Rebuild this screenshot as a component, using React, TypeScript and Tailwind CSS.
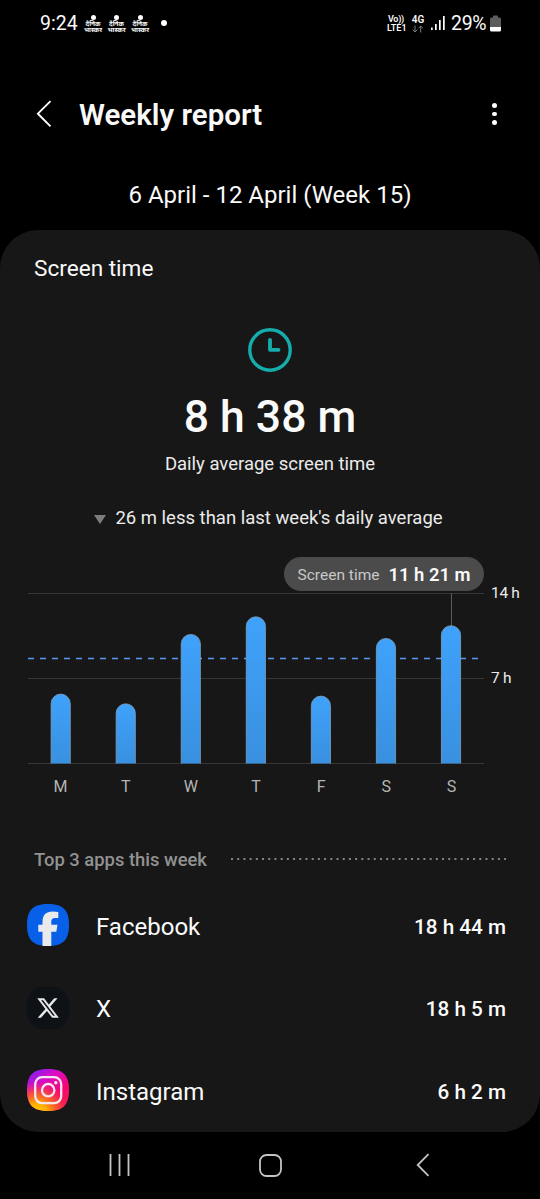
import React from "react";
import { FaXTwitter } from "react-icons/fa6";

type Day = {
  label: string;
  minutes: number;
};

type AppUsage = {
  name: string;
  time: string;
  icon: React.ReactNode;
};

const days: Day[] = [
  { label: "M", minutes: 343 },
  { label: "T", minutes: 295 },
  { label: "W", minutes: 638 },
  { label: "T", minutes: 725 },
  { label: "F", minutes: 333 },
  { label: "S", minutes: 618 },
  { label: "S", minutes: 681 },
];

const PLOT_HEIGHT = 170;
const MAX_MINUTES = 14 * 60;
const AVERAGE = 8 * 60 + 38;

const toPx = (minutes: number) => (minutes / MAX_MINUTES) * PLOT_HEIGHT;

const NewsIcon = () => (
  <div className="flex w-[18px] flex-col items-center text-[6.5px] leading-[6px] font-bold">
    <span className="mb-[1px] h-[5px] w-[5px] rounded-full bg-white" />
    <span>दैनिक</span>
    <span>भास्कर</span>
  </div>
);

const StatusBar = () => (
  <div className="flex h-[46px] items-center justify-between pr-[39px] pl-[40px]">
    <div className="flex items-center">
      <span className="w-[44px] pt-[2px] text-[19.5px] leading-[24px] whitespace-nowrap">9:24</span>
      <div className="mt-[1px] flex gap-[5.5px]">
        <NewsIcon />
        <NewsIcon />
        <NewsIcon />
      </div>
      <span className="ml-[12px] h-[6px] w-[6px] rounded-full bg-white" />
    </div>
    <div className="flex items-center">
      <div className="mt-[1px] w-[20px] text-[9px] leading-[8.5px] font-semibold whitespace-nowrap">
        <div className="pl-[1px] tracking-[-0.3px]">Vo))</div>
        <div>LTE1</div>
      </div>
      <div className="mt-[1px] ml-[4px] flex w-[14px] flex-col items-center">
        <span className="text-[10px] leading-[10px] font-semibold">4G</span>
        <svg width="12" height="8" viewBox="0 0 12 8" fill="none" stroke="#7d7d7d">
          <path d="M3 .5v6.5M.7 4.7 3 7l2.3-2.3M8.7 7.5V1M6.4 3.3 8.7 1 11 3.3" />
        </svg>
      </div>
      <svg className="ml-[6px]" width="15" height="16" viewBox="0 0 15 16" fill="#fff">
        <rect x="0" y="12.5" width="1.7" height="2.5" />
        <rect x="4" y="9" width="1.7" height="6" />
        <rect x="8" y="5" width="1.7" height="10" />
        <rect x="12" y="1" width="1.7" height="14" />
      </svg>
      <span className="ml-[5px] w-[36px] pt-[2px] text-[19.5px] leading-[24px] tracking-[-0.3px] whitespace-nowrap">29%</span>
      <svg className="ml-[3px]" width="11" height="17" viewBox="0 0 11 17">
        <path d="M3 1.2Q3 .5 3.7.5h3.6Q8 .5 8 1.2V2.5h1.5Q11 2.5 11 4v8H0V4Q0 2.5 1.5 2.5H3z" fill="#5c5c5c" />
        <path d="M0 12h11v3q0 1.5-1.5 1.5h-8Q0 16.5 0 15z" fill="#fff" />
      </svg>
    </div>
  </div>
);

const Header = () => (
  <header className="flex h-[136px] items-center pr-[43px] pl-[36px]">
    <svg width="16" height="28" viewBox="0 0 16 28" fill="none" stroke="#fff" strokeWidth="1.9">
      <path d="M14.5 1.2 1.9 13.7l12.6 12.6" />
    </svg>
    <h1 className="ml-[27px] flex-1 pt-[2px] text-[29.5px] leading-[40px] font-semibold">Weekly report</h1>
    <div className="flex w-[5px] flex-col gap-[4px]">
      <span className="h-[4.6px] w-[4.6px] rounded-full bg-white" />
      <span className="h-[4.6px] w-[4.6px] rounded-full bg-white" />
      <span className="h-[4.6px] w-[4.6px] rounded-full bg-white" />
    </div>
  </header>
);

const Chart = () => (
  <div className="relative mt-[62px] ml-[28px] flex">
    <div className="w-[456px]">
      <svg className="block" width="456" height="171" viewBox="0 0 456 171">
        <defs>
          <linearGradient id="bar" x1="0" y1="0" x2="0" y2="1">
            <stop offset="0" stopColor="#3fa2fb" />
            <stop offset="1" stopColor="#3990df" />
          </linearGradient>
        </defs>
        <path d="M0 .5h456M0 85.5h456M0 170.5h456" stroke="#363636" />
        <path
          d={`M0 ${PLOT_HEIGHT - toPx(AVERAGE) + 0.3}h451`}
          stroke="#5b97ee"
          strokeWidth="1.5"
          strokeDasharray="6 6"
        />
        <path d="M423.5 0v33" stroke="#5a5a5a" />
        {days.map(({ minutes }, i) => {
          const x = 23.1 + i * 65.05;
          const top = PLOT_HEIGHT + 0.5 - toPx(minutes);
          return (
            <path
              key={i}
              d={`M${x} 170.5V${top + 9.6}a9.6 9.6 0 0 1 19.2 0V170.5`}
              fill="url(#bar)"
              stroke="#7d9fbd"
              strokeWidth=".8"
            />
          );
        })}
      </svg>
      <div className="mt-[11px] grid h-[22px] grid-cols-7 items-center text-center text-[16px] text-[#b4b4b4]">
        {days.map(({ label }, i) => (
          <span key={i}>{label}</span>
        ))}
      </div>
    </div>
    <div className="-mt-[10px] ml-[7px] text-[15.5px] leading-[20px] tracking-[-0.3px] whitespace-nowrap text-[#ececec]">
      <div>14 h</div>
      <div className="mt-[65px]">7 h</div>
    </div>
    <div className="absolute -top-[36px] left-[256px] flex h-[34px] w-[200px] items-center justify-center gap-[9px] rounded-full bg-[#4b4b4b] pt-[2px] leading-[24px] whitespace-nowrap">
      <span className="text-[15.5px] text-[#c8c8c8]">Screen time</span>
      <span className="text-[18.4px] font-semibold">11 h 21 m</span>
    </div>
  </div>
);

const FacebookIcon = () => (
  <svg width="42" height="42" viewBox="0 0 42 42">
    <path d="M21 0C36 0 42 6 42 21S36 42 21 42 0 36 0 21 6 0 21 0z" fill="#0860e8" />
    <path
      d="M15.5 42V27.8h-4.2v-7.1h4.2v-2.500C15.500 11 19 7.600 25.500 7.600c2.300 0 4.200.2 5.800.500v6h-3c-3 0-4 1.200-4 3.600v3h6.200l-1.200 7.100h-5V42z"
      fill="#e9eaec"
    />
  </svg>
);

const XIcon = () => (
  <div className="flex h-[42px] w-[42px] items-center justify-center rounded-[16px] bg-[#0e1116]">
    <FaXTwitter size={24} color="#e6e7e8" />
  </div>
);

const InstagramIcon = () => (
  <svg width="42" height="42" viewBox="0 0 42 42">
    <defs>
      <linearGradient id="ig-base" x1=".15" y1="0" x2=".85" y2="1">
        <stop offset="0" stopColor="#7a20f0" />
        <stop offset=".3" stopColor="#d80cc8" />
        <stop offset=".65" stopColor="#f8066f" />
        <stop offset="1" stopColor="#f2204c" />
      </linearGradient>
      <radialGradient id="ig-glow" cx=".25" cy="1.05" r=".75">
        <stop offset="0" stopColor="#ffd000" />
        <stop offset=".3" stopColor="#ffb000" />
        <stop offset=".65" stopColor="#fb5a2c" stopOpacity=".85" />
        <stop offset="1" stopColor="#fb2c50" stopOpacity="0" />
      </radialGradient>
    </defs>
    <path d="M21 0C36 0 42 6 42 21S36 42 21 42 0 36 0 21 6 0 21 0z" fill="url(#ig-base)" />
    <path d="M21 0C36 0 42 6 42 21S36 42 21 42 0 36 0 21 6 0 21 0z" fill="url(#ig-glow)" />
    <g fill="none" stroke="#f5e6ee" strokeWidth="2.3">
      <rect x="8.2" y="8.2" width="26" height="26" rx="7" />
      <circle cx="21.2" cy="21.2" r="6.2" />
    </g>
    <circle cx="28.8" cy="13.8" r="1.7" fill="#f5e6ee" />
  </svg>
);

const apps: AppUsage[] = [
  { name: "Facebook", time: "18 h 44 m", icon: <FacebookIcon /> },
  { name: "X", time: "18 h 5 m", icon: <XIcon /> },
  { name: "Instagram", time: "6 h 2 m", icon: <InstagramIcon /> },
];

const TopApps = () => (
  <section>
    <div className="mt-[51px] flex h-[24px] items-center pr-[34px] pl-[34px]">
      <h3 className="w-[197px] text-[18.4px] leading-[24px] font-medium whitespace-nowrap text-[#929292]">
        Top 3 apps this week
      </h3>
      <svg className="-mt-[2px]" width="276" height="2" viewBox="0 0 276 2">
        <path d="M0 1h276" stroke="#858585" strokeWidth="1.8" strokeDasharray="2 4.22" />
      </svg>
    </div>
    <ul className="mt-[12px]">
      {apps.map(({ name, time, icon }) => (
        <li key={name} className="flex h-[82.5px] items-center pr-[34px] pl-[27px]">
          {icon}
          <span className="ml-[27px] flex-1 pt-[3px] text-[24px] leading-[32px]">{name}</span>
          <span className="pt-[3px] text-[20.7px] leading-[32px] font-medium">{time}</span>
        </li>
      ))}
    </ul>
  </section>
);

const NavBar = () => (
  <nav className="flex h-[67.5px] items-center justify-between pr-[110px] pl-[109px]">
    <svg width="21" height="22" viewBox="0 0 21 22" stroke="#c4c4c4" strokeWidth="1.8">
      <path d="M1.5 0v22M10.5 0v22M19.5 0v22" />
    </svg>
    <svg className="mr-[5px]" width="23" height="23" viewBox="0 0 23 23" fill="none" stroke="#c4c4c4" strokeWidth="1.8">
      <rect x="1" y="1" width="21" height="21" rx="6.5" />
    </svg>
    <svg width="15" height="24" viewBox="0 0 15 24" fill="none" stroke="#c4c4c4" strokeWidth="1.8">
      <path d="M13.5 1.2 2.7 12l10.8 10.8" />
    </svg>
  </nav>
);

export default function App() {
  return (
    <div className="h-[1199px] w-[540px] overflow-hidden bg-black font-['Roboto','Noto_Sans',sans-serif] text-[#fafafa]">
      <StatusBar />
      <Header />
      <div className="-mt-[3px] flex h-[32px] items-center justify-center text-[24px]">6 April - 12 April (Week 15)</div>
      <main className="mt-[19px] h-[901.5px] rounded-[38px] bg-[#171717]">
        <h2 className="pt-[23px] pl-[34px] text-[22.6px] leading-[32px]">Screen time</h2>
        <div className="mt-[43px] flex flex-col items-center">
          <svg width="44" height="44" viewBox="0 0 44 44" fill="none" stroke="#16acac" strokeWidth="3.4">
            <circle cx="22" cy="22" r="20.2" />
            <path d="M22 11.8v10h8.5" strokeWidth="3.8" strokeLinecap="round" strokeLinejoin="round" />
          </svg>
          <div className="mt-[20px] text-[44.5px] leading-[50px] font-medium">8 h 38 m</div>
          <div className="mt-[10px] text-[18.5px] leading-[24px] text-[#ebebeb]">Daily average screen time</div>
          <div className="mt-[31px] flex h-[24px] items-center pr-[3px] text-[18.5px] text-[#ebebeb]">
            <svg className="mt-[1px] mr-[9px]" width="12" height="9" viewBox="0 0 12 9">
              <path d="M0 0h12L6 9z" fill="#7d7d7d" />
            </svg>
            26 m less than last week's daily average
          </div>
        </div>
        <Chart />
        <TopApps />
      </main>
      <NavBar />
    </div>
  );
}
